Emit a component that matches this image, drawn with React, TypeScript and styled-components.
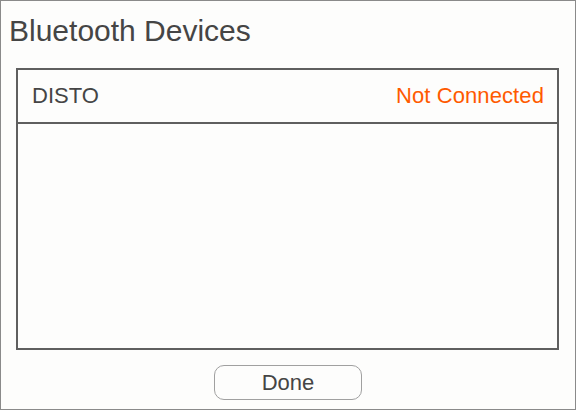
import React from 'react';
import styled, { createGlobalStyle } from 'styled-components';

const GlobalStyle = createGlobalStyle`
  html, body {
    margin: 0;
    padding: 0;
    background: #fdfdfc;
  }
  * {
    box-sizing: border-box;
  }
`;

const Window = styled.div`
  width: 576px;
  height: 410px;
  border: 1px solid #8a8a8a;
  background: #fdfdfc;
  display: flex;
  flex-direction: column;
  font-family: 'Liberation Sans', Arial, sans-serif;
  color: #454545;
`;

const Title = styled.h1`
  margin: 0 0 20px 0;
  padding: 13px 0 0 8px;
  font-size: 30px;
  font-weight: normal;
  line-height: 34px;
`;

const DeviceList = styled.div`
  margin: 0 16px 0 15px;
  height: 282px;
  border: 2px solid #5f5f5f;
  display: flex;
  flex-direction: column;
`;

const DeviceRow = styled.div`
  height: 54px;
  border-bottom: 2px solid #5f5f5f;
  display: flex;
  align-items: center;
  justify-content: space-between;
  padding: 0 13px 0 14px;
  font-size: 22px;
`;

const Status = styled.span<{ $connected: boolean }>`
  color: ${(p) => (p.$connected ? '#3a9a3a' : '#ff5a00')};
  letter-spacing: 0.1px;
`;

const Footer = styled.div`
  display: flex;
  justify-content: center;
  padding-top: 15px;
`;

const Button = styled.button`
  width: 148px;
  height: 35px;
  border: 1.5px solid #a0a0a0;
  border-radius: 10px;
  background: #fdfdfc;
  font-family: 'Liberation Sans', Arial, sans-serif;
  font-size: 22px;
  color: #454545;
  padding: 0;
  cursor: pointer;
`;

const devices = [{ name: 'DISTO', connected: false }];

const App = () => {
  return (
    <>
      <GlobalStyle />
      <Window>
        <Title>Bluetooth Devices</Title>
        <DeviceList>
          {devices.map((d) => (
            <DeviceRow key={d.name}>
              <span>{d.name}</span>
              <Status $connected={d.connected}>
                {d.connected ? 'Connected' : 'Not Connected'}
              </Status>
            </DeviceRow>
          ))}
        </DeviceList>
        <Footer>
          <Button>Done</Button>
        </Footer>
      </Window>
    </>
  );
};

export default App;
